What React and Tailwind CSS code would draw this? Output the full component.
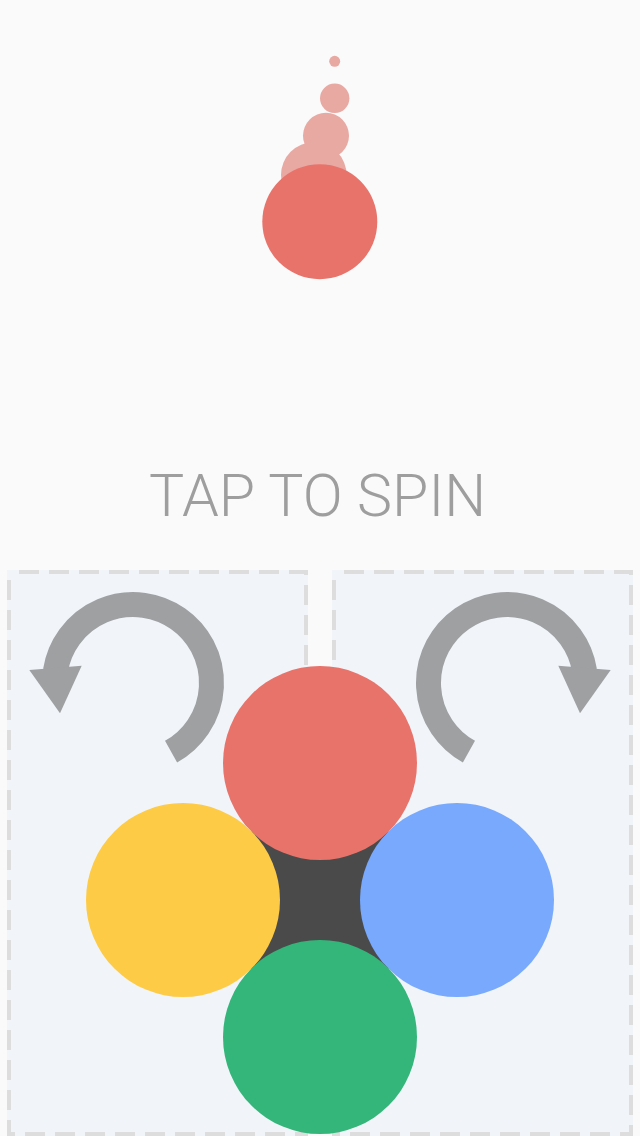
const TRAIL = [
  { cx: 334.7, cy: 61.3, r: 5.5 },
  { cx: 334.7, cy: 98.3, r: 14.7 },
  { cx: 326, cy: 135.7, r: 23 },
  { cx: 313.8, cy: 175, r: 32.8 },
];

const WHEEL = [
  { cx: 320, cy: 763, fill: "#e8736a" },
  { cx: 183, cy: 900, fill: "#fdcb45" },
  { cx: 457, cy: 900, fill: "#78a9fd" },
  { cx: 320, cy: 1037, fill: "#34b67a" },
];

// panel svg uses page coordinates through its viewBox
function Panel({ x, mirror }) {
  const mx = (v) => (mirror ? 640 - v : v);
  const sweep = mirror ? 1 : 0;
  const arc = `M ${mx(171.06)} 751.66 A 78.5 78.5 0 1 ${sweep} ${mx(55.47)} 670.72`;
  const head = [
    [29.3, 670],
    [81.7, 665.7],
    [60, 713.3],
  ]
    .map(([px, py]) => `${mx(px)},${py}`)
    .join(" ");

  return (
    <div className="relative flex-1 bg-[#f1f5fa]">
      <svg
        className="absolute inset-0 h-full w-full"
        viewBox={`${x} 570 301 566`}
        preserveAspectRatio="none"
      >
        <rect
          x={x + 2}
          y={572}
          width={297}
          height={562}
          fill="none"
          stroke="#dddddd"
          strokeWidth="4"
          strokeDasharray="20 10"
          strokeDashoffset="-10"
        />
        <path d={arc} fill="none" stroke="#9fa0a2" strokeWidth="25" />
        <polygon points={head} fill="#9fa0a2" />
      </svg>
    </div>
  );
}

export default function App() {
  return (
    <div className="relative flex h-[1136px] w-[640px] flex-col overflow-hidden bg-[#fafafa] font-['Roboto',sans-serif]">
      {/* ── Falling ball ── */}
      <div className="flex h-[570px] flex-col items-center">
        <svg width="640" height="300" viewBox="0 0 640 300" className="block">
          {TRAIL.map((b, i) => (
            <circle key={i} cx={b.cx} cy={b.cy} r={b.r} fill="#e8a9a3" />
          ))}
          <circle cx="319.8" cy="221.7" r="57.5" fill="#e8736a" />
        </svg>
        <p className="mt-[166px] pr-[5px] text-[59px] leading-none font-light text-[#9e9e9e]">
          TAP TO SPIN
        </p>
      </div>

      {/* ── Tap zones ── */}
      <div className="flex flex-1 gap-[24px] px-[7px]">
        <Panel x={7} />
        <Panel x={332} mirror />
      </div>

      {/* ── Wheel ── */}
      <svg
        className="absolute top-[666px] left-[86px]"
        width="468"
        height="470"
        viewBox="86 666 468 470"
      >
        <polygon points="320,763 457,900 320,1037 183,900" fill="#4a4a4a" />
        {WHEEL.map((c) => (
          <circle key={c.fill} cx={c.cx} cy={c.cy} r="97" fill={c.fill} />
        ))}
      </svg>
    </div>
  );
}
